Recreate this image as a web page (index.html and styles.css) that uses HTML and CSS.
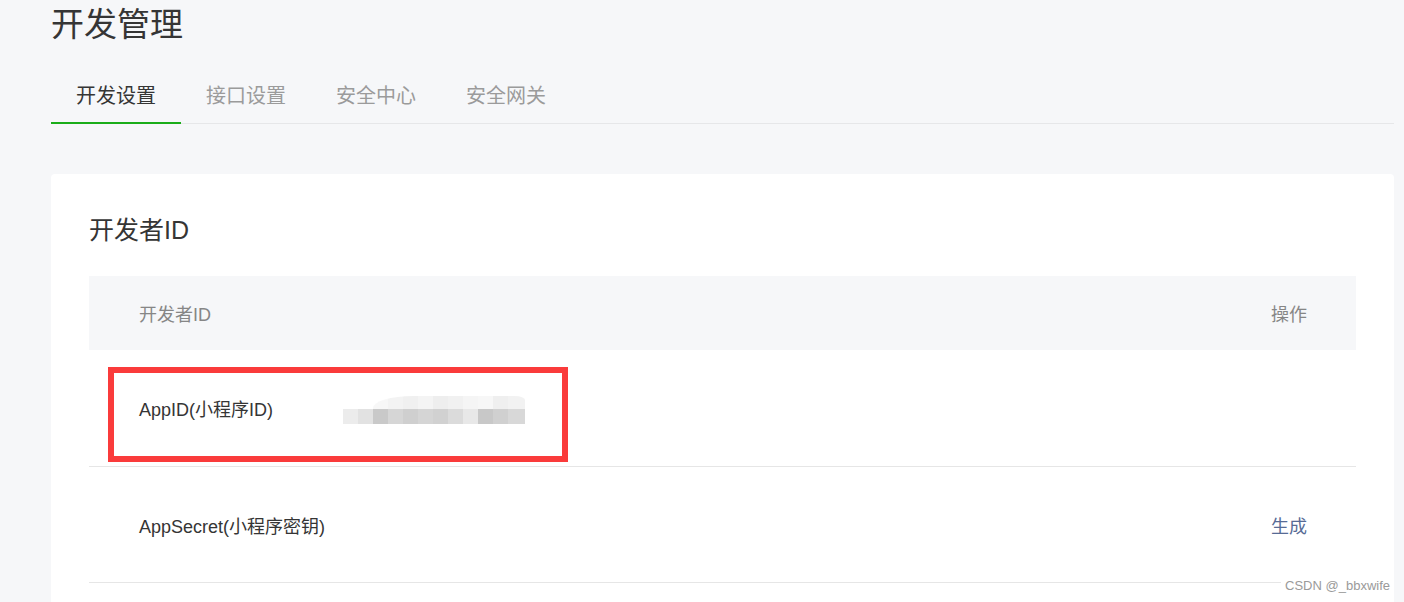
FILE: index.html
```html
<!DOCTYPE html>
<html lang="zh-CN">
<head>
<meta charset="utf-8">
<title>开发管理</title>
<link rel="stylesheet" href="styles.css">
</head>
<body>
<div class="page">
  <h1 class="page-title">开发管理</h1>
  <nav class="tabs">
    <a class="tab active">开发设置</a>
    <a class="tab">接口设置</a>
    <a class="tab">安全中心</a>
    <a class="tab">安全网关</a>
  </nav>
  <section class="card">
    <h2 class="card-title">开发者ID</h2>
    <div class="table">
      <div class="thead">
        <span>开发者ID</span>
        <span>操作</span>
      </div>
      <div class="row row-first">
        <span class="label">AppID(小程序ID)</span>
        <span class="blur">
          <span class="blur-top"></span>
          <span class="blur-bottom"></span>
        </span>
        <span class="mark"></span>
      </div>
      <div class="row">
        <span class="label">AppSecret(小程序密钥)</span>
        <a class="link">生成</a>
      </div>
    </div>
  </section>
</div>
<div class="watermark">CSDN @_bbxwife</div>
</body>
</html>
```

FILE: styles.css
```css
html, body {
  margin: 0;
  padding: 0;
}
body {
  background: #f6f7f9;
  font-family: "Liberation Sans", "Noto Sans CJK SC", sans-serif;
  color: #353535;
  height: 602px;
  overflow: hidden;
}
.page {
  padding: 0 10px 0 51px;
}
.page-title {
  margin: 0;
  font-size: 33px;
  font-weight: normal;
  line-height: 50px;
  color: #353535;
}
.tabs {
  display: flex;
  margin-top: 26px;
  border-bottom: 1px solid #e6e7e9;
}
.tab {
  display: block;
  padding: 0 25px 6px;
  line-height: 40px;
  font-size: 20px;
  color: #9b9b9b;
  border-bottom: 2px solid transparent;
  margin-bottom: -1px;
}
.tab.active {
  color: #353535;
  border-bottom-color: #1aad19;
}
.card {
  margin-top: 50px;
  background: #fff;
  border-radius: 4px;
  padding: 40px 38px 0;
  height: 600px;
}
.card-title {
  margin: 0;
  font-size: 25px;
  font-weight: normal;
  line-height: 32px;
  color: #353535;
}
.table {
  margin-top: 30px;
}
.thead {
  height: 74px;
  background: #f6f7f9;
  display: flex;
  align-items: center;
  justify-content: space-between;
  padding: 0 49px 0 50px;
  font-size: 18px;
  color: #868686;
}
.row {
  position: relative;
  height: 115px;
  border-bottom: 1px solid #e6e6e6;
  display: flex;
  align-items: center;
  padding: 0 49px 0 50px;
  font-size: 18px;
  color: #353535;
}
.row-first {
  height: 116px;
}
.label {
  flex: none;
  width: 204px;
}
.link {
  margin-left: auto;
  color: #576b95;
}
.blur {
  display: flex;
  flex-direction: column;
  width: 182px;
  height: 28px;
  margin-top: 4px;
}
.blur-top {
  display: block;
  height: 13px;
  margin-left: 30px;
  border-top-left-radius: 40px 12px;
  border-top-right-radius: 10px 4px;
  background: linear-gradient(to right,
    #f7f7f7 0 15px, #f3f3f3 15px 30px, #f0f0f0 30px 45px, #f4f4f4 45px 60px,
    #eeeeee 60px 75px, #f1f1f1 75px 90px, #f5f5f5 90px 105px, #f7f7f7 105px 120px,
    #efefef 120px 135px, #f2f2f2 135px 152px);
}
.blur-bottom {
  display: block;
  height: 15px;
  background: linear-gradient(to right,
    #ececec 0 15px, #e2e2e2 15px 30px, #c9c9c9 30px 45px, #d6d6d6 45px 60px,
    #cfcfcf 60px 75px, #d5d5d5 75px 90px, #d1d1d1 90px 105px, #dbdbdb 105px 120px,
    #e8e8e8 120px 135px, #c8c8c8 135px 150px, #d0d0d0 150px 165px, #d8d8d8 165px 182px);
}
.mark {
  position: absolute;
  left: 19px;
  top: 17px;
  width: 448px;
  height: 83px;
  border: 6px solid #fa3b3b;
}
.watermark {
  position: fixed;
  right: 12px;
  bottom: 7px;
  background: #fff;
  padding: 0 2px 0 4px;
  font-family: "Liberation Sans", sans-serif;
  font-size: 13px;
  line-height: 18px;
  color: #9a9a9a;
}
```
